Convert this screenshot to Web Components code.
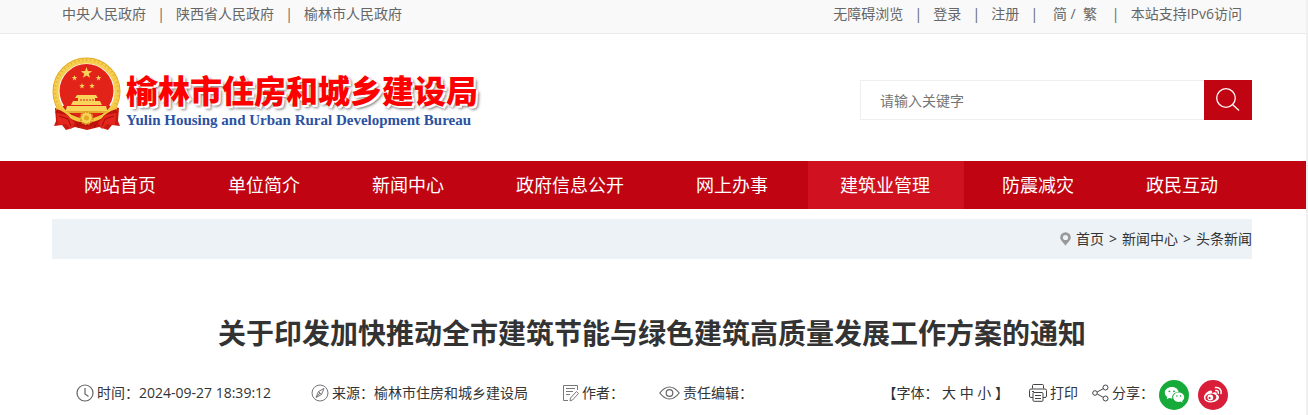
<!DOCTYPE html>
<html lang="zh-CN">
<head>
<meta charset="utf-8">
<title>榆林市住房和城乡建设局</title>
<style>
    body{
        --red:#c00411;
        --red-active:#d01220;
        --side:0 54px 0 52px;
        margin:0;
        border-right:2px solid #f0f0f0;
        background:#fff;
        color:#333;
        font:14px/28px "Open Sans","Noto Sans CJK SC",sans-serif;
        min-height:100vh;
        box-sizing:border-box;
    }
</style>
</head>
<body>
    <top-bar>
        <link-row>
            <a href="#">中央人民政府</a>
            <a href="#">陕西省人民政府</a>
            <a href="#">榆林市人民政府</a>
        </link-row>
        <link-row slot="end">
            <a href="#">无障碍浏览</a>
            <a href="#">登录</a>
            <a href="#">注册</a>
            <a href="#">&nbsp;简 /&nbsp; 繁&nbsp;</a>
            <a href="#">本站支持IPv6访问</a>
        </link-row>
    </top-bar>

    <site-header>
        <site-logo>
            <span slot="name">榆林市住房和城乡建设局</span>
            <span slot="english">Yulin Housing and Urban Rural Development Bureau</span>
        </site-logo>
        <search-box slot="search" placeholder="请输入关键字"></search-box>
    </site-header>

    <main-nav>
        <a href="#">网站首页</a>
        <a href="#">单位简介</a>
        <a href="#">新闻中心</a>
        <a href="#">政府信息公开</a>
        <a href="#">网上办事</a>
        <a href="#" class="active">建筑业管理</a>
        <a href="#">防震减灾</a>
        <a href="#">政民互动</a>
    </main-nav>

    <bread-crumbs>
        <a href="#">首页</a>
        <span>&gt;</span>
        <a href="#">新闻中心</a>
        <span>&gt;</span>
        <a href="#">头条新闻</a>
    </bread-crumbs>

    <news-article>
        <span slot="title">关于印发加快推动全市建筑节能与绿色建筑高质量发展工作方案的通知</span>
        <meta-item icon="clock" class="date">时间：2024-09-27 18:39:12</meta-item>
        <meta-item icon="compass">来源：榆林市住房和城乡建设局</meta-item>
        <meta-item icon="note">作者：</meta-item>
        <meta-item icon="eye">责任编辑：</meta-item>
        <article-tools slot="tools"></article-tools>
    </news-article>

<script>
const icons = {
    clock:`<svg width="18" height="18" viewBox="0 0 18 18" fill="none" stroke="#666" stroke-width="1.200"><circle cx="9" cy="9" r="8"/><path d="M9 4v6l3.500 2.500"/></svg>`,
    compass:`<svg width="18" height="18" viewBox="0 0 18 18" fill="none" stroke="#777"><circle cx="9" cy="9" r="8"/><path d="M13 4.500 7.500 7.500 5 13.500l5.500-3z"/><path d="M7.500 7.500l3 3M5.500 13l3.500-4"/></svg>`,
    note:`<svg width="16" height="18" viewBox="0 0 16 18" fill="none" stroke="#777"><path d="M14.500 6V1.500H.5v15h4.500M3 4.500h9M3 7.500h7M3 10.500h4"/><path d="M13.500 7.500l2 2-6 6.500-2.500.8.500-2.800z"/></svg>`,
    eye:`<svg width="21" height="18" viewBox="0 0 21 18" fill="none" stroke="#666" stroke-width="1.200"><path d="M.8 9Q5.500 3 10.500 3t9.700 6Q15.500 15 10.500 15T.8 9z"/><circle cx="10.500" cy="9" r="3.300"/></svg>`,
    printer:`<svg width="18" height="18" viewBox="0 0 18 18" fill="none" stroke="#444"><path d="M3.500 4.500v-3q0-1 1-1h9q1 0 1 1v3M4 13.500H2Q.5 13.500.5 12V6.500Q.5 5 2 5h14q1.500 0 1.500 1.500V12q0 1.500-1.500 1.500h-2"/><rect x="4" y="8.500" width="10" height="8.800" rx="1"/><path d="M6 11.500h6M6 14.500h6M3 7.500h2"/></svg>`,
    share:`<svg width="17" height="18" viewBox="0 0 17 18" fill="none" stroke="#444"><circle cx="3" cy="9" r="2.300"/><circle cx="13.500" cy="3.500" r="2.500"/><circle cx="13.500" cy="14.500" r="2.500"/><path d="M5.200 8l6-3.300M5.200 10l6 3.300"/></svg>`,
    pin:`<svg width="11" height="14" viewBox="0 0 11 14"><path fill="#999" fill-rule="evenodd" d="M5.500.2A5.300 5.300 0 0 0 .2 5.500C.2 8.500 3.500 10.500 5.500 13.800c2-3.300 5.300-5.300 5.300-8.300A5.300 5.300 0 0 0 5.500.2zm0 2.700a2.600 2.600 0 1 1 0 5.200 2.600 2.600 0 0 1 0-5.200z"/></svg>`,
    search:`<svg width="24" height="24" viewBox="0 0 24 24" fill="none" stroke="#fff" stroke-width="1.300"><circle cx="10" cy="10" r="9.300"/><path d="M16.500 16.500l6.500 6"/></svg>`,
    wechat:`<svg width="30" height="30" viewBox="0 0 30 30"><circle cx="15" cy="15" r="15" fill="#15aa39"/><path fill="#fff" d="M12.800 7C8.900 7 5.800 9.500 5.800 12.700c0 1.800 1 3.400 2.600 4.400l-.7 2.200 2.500-1.300c.8.200 1.600.4 2.500.4h.6c-.8-3.600 2.300-6.500 6.300-6.500C19 9 16.300 7 12.800 7z"/><path fill="#fff" d="M25.200 17.200c0-2.600-2.600-4.600-5.500-4.600s-5.500 2-5.500 4.600 2.500 4.700 5.500 4.700c.7 0 1.300-.1 1.900-.3l2 1.100-.5-1.800c1.300-.9 2.100-2.200 2.100-3.700z"/><g fill="#15aa39"><circle cx="10.400" cy="11.300" r=".9"/><circle cx="15" cy="11.300" r=".9"/><circle cx="17.900" cy="16" r=".8"/><circle cx="21.500" cy="16" r=".8"/></g></svg>`,
    weibo:`<svg width="30" height="30" viewBox="0 0 30 30"><circle cx="15" cy="15" r="15" fill="#d81e38"/><path fill="#fff" d="M13.800 11c-1.200-1.300-4.400.3-6.400 2.800-3.200 3.900-1.200 8.600 5.400 8.600 4.600 0 8.200-2.500 8.200-5.200 0-1.600-1.200-2.400-2.400-2.700.7-1.900-.7-2.900-4.600-1.600 .3-.9.200-1.500-.2-1.900z"/><ellipse cx="12.900" cy="17.400" rx="5.500" ry="3.800" fill="#d81e38" transform="rotate(-8 12.900 17.400)"/><circle cx="12.300" cy="17.500" r="2.900" fill="#fff"/><circle cx="11.600" cy="18" r="1.100" fill="#d81e38"/><path fill="none" stroke="#fff" stroke-width="1.500" stroke-linecap="round" d="M17.500 7.600c3.700-.8 6.600 2.300 5.500 6M17.800 10.500c1.700-.3 2.900 1 2.400 2.700"/></svg>`
}

const star = (x, y, r) => {
    let points = []
    for(let i = 0; i < 10; i++){
        const size = i % 2 ? r * .4 : r
        const angle = Math.PI * (i / 5 - .5)
        points.push((x + size * Math.cos(angle)).toFixed(2) + "," + (y + size * Math.sin(angle)).toFixed(2))
    }
    return `<polygon points="${points.join(" ")}"/>`
}

// every element clones its template into an open shadow root
class BaseElement extends HTMLElement{
    constructor(){
        super()
        this.attachShadow({mode:'open'})
    }

    connectedCallback(){
        const template = document.createElement("template")
        template.innerHTML = this.getTemplate() + `<style>${this.getStyle()}</style>`
        this.shadowRoot.replaceChildren(template.content.cloneNode(true))
    }
}

class TopBar extends BaseElement{
    getTemplate(){
        return `<slot></slot><slot name="end"></slot>`
    }

    getStyle(){
        return `
            :host{
                display:flex;
                justify-content:space-between;
                padding:var(--side);
                height:33px;
                background:#f9f9f9;
                border-bottom:1px solid #ebebeb;
                color:#666;
            }
        `
    }
}

class LinkRow extends BaseElement{
    getTemplate(){
        return [...this.children].map((link, i) => {
            link.slot = "link" + i
            return (i ? `<span>|</span>` : "") + `<slot name="link${i}"></slot>`
        }).join("")
    }

    getStyle(){
        return `
            :host{
                display:flex;
                padding:0 10px;
            }
            span{
                width:30px;
                text-align:center;
            }
            ::slotted(a){
                color:inherit;
                text-decoration:none;
            }
        `
    }
}

class SiteHeader extends BaseElement{
    getTemplate(){
        return `<header><slot></slot><slot name="search"></slot></header>`
    }

    getStyle(){
        return `
            :host{
                display:block;
                padding:var(--side);
            }
            header{
                display:flex;
                justify-content:space-between;
                padding:23px 0 29px;
            }
        `
    }
}

class SiteLogo extends BaseElement{
    getTemplate(){
        return `
            ${this.getEmblem()}
            <div>
                <h1><slot name="name"></slot></h1>
                <p><slot name="english"></slot></p>
            </div>
        `
    }

    getEmblem(){
        return `
        <svg width="70" height="75" viewBox="0 0 70 75">
            <path fill="#c91a12" d="M3 51l12-3h40l12 3-1 13 2 5-8-1-4 5-9-3-12 3-12-3-9 3-4-5-8 1 2-5z"/>
            <circle cx="34.500" cy="34.500" r="31.500" fill="none" stroke="#e3ac25" stroke-width="5"/>
            <circle cx="34.500" cy="34.500" r="30.500" fill="none" stroke="#f6cf50" stroke-width="5"/>
            <circle cx="34.500" cy="34.500" r="31.500" fill="none" stroke="#e3ac30" stroke-width="2" stroke-dasharray="1 3"/>
            <circle cx="34.500" cy="34" r="27" fill="#e2231a"/>
            <g fill="#f8d35a">
                ${star(34.5, 16, 6)}${star(22.5, 21, 3)}${star(46.5, 21, 3)}${star(30, 29, 3)}${star(40, 29, 3)}
            </g>
            <g fill="#f9d45b">
                <path d="M25 38h19l2 3H23zM26 41h17v3H26zM21 44h27l2 4H19zM15 49h39l2 7H13z"/>
                <path fill="#e4ab2c" d="M13 54h43v2H13z"/>
            </g>
            <path stroke="#d52a1b" d="M29 42v2M32 42v2M35 42v2M38 42v2M41 42v2"/>
            <path fill="#f4c743" d="M5 47q14 14 29.500 15Q50 61 64 47l1 6Q54 64 34.500 68 15 64 4 53z"/>
            <path fill="none" stroke="#be120d" stroke-width="4" d="M4 54q9 3 13 9 9 5 17 4 8 1 17-4 4-6 14-9"/>
            <circle cx="34.500" cy="61" r="6" fill="#f8d35a" stroke="#d99c1d" stroke-width="2" stroke-dasharray="2 1"/>
            <circle cx="34.500" cy="61" r="2.500" fill="#e4a821"/>
            <path fill="#e5261c" d="M5 56l10 2 8 8-4 6-5-5-8 1zM64 56l-10 2-8 8 4 6 5-5 8 1z"/>
            <path fill="none" stroke="#9f0d0a" d="M7 59l9 3 3 7M62 59l-9 3-3 7M25 68l2 3M44 68l-2 3"/>
        </svg>`
    }

    getStyle(){
        return `
            :host{
                display:flex;
                gap:4px;
            }
            div{
                padding-top:11px;
            }
            h1,p{
                margin:0;
                white-space:nowrap;
            }
            h1{
                color:#fe0000;
                font-family:"Noto Sans CJK SC",sans-serif;
                font-size:32px;
                font-weight:900;
                line-height:42px;
                text-shadow:1px 1px 0 #fff,2px 2px 0 #fff,3px 3px 3px #777;
            }
            p{
                color:#2b52a0;
                font-family:"Liberation Serif",serif;
                font-size:15px;
                font-weight:700;
                line-height:20px;
            }
        `
    }
}

class SearchBox extends BaseElement{
    getTemplate(){
        return `
            <form>
                <input type="text" aria-label="搜索" placeholder="${this.getAttribute("placeholder")}">
                <button type="button" aria-label="搜索">${icons.search}</button>
            </form>
        `
    }

    getStyle(){
        return `
            :host{
                flex:0 1 392px;
                padding-top:23px;
            }
            form{
                display:flex;
                height:40px;
            }
            input{
                flex:1;
                min-width:0;
                padding:2px 19px 0;
                border:1px solid #eee;
                border-right:0;
                font:inherit;
            }
            input::placeholder{
                color:#757575;
            }
            button{
                display:grid;
                place-items:center;
                width:48px;
                padding:0;
                border:0;
                background:var(--red);
            }
        `
    }
}

class MainNav extends BaseElement{
    getTemplate(){
        return `<nav><slot></slot></nav>`
    }

    getStyle(){
        return `
            :host{
                display:block;
                padding:var(--side);
                background:var(--red);
            }
            nav{
                display:flex;
                gap:6px;
            }
            ::slotted(a){
                padding:0 34px 0 32px;
                color:#fff;
                font-size:18px;
                line-height:48px;
                text-decoration:none;
                white-space:nowrap;
            }
            ::slotted(.active){
                background:var(--red-active);
            }
        `
    }
}

class BreadCrumbs extends BaseElement{
    getTemplate(){
        return `<nav>${icons.pin}<slot></slot></nav>`
    }

    getStyle(){
        return `
            :host{
                display:block;
                padding:var(--side);
            }
            nav{
                display:flex;
                align-items:center;
                justify-content:flex-end;
                gap:5px;
                height:40px;
                margin-top:10px;
                background:#edf2f6;
            }
            ::slotted(*){
                color:#333;
                text-decoration:none;
            }
        `
    }
}

class NewsArticle extends BaseElement{
    getTemplate(){
        return `
            <h2><slot name="title"></slot></h2>
            <section>
                <slot></slot>
                <slot name="tools"></slot>
            </section>
        `
    }

    getStyle(){
        return `
            :host{
                display:block;
                padding:var(--side);
            }
            h2{
                margin:53px 0 26px;
                font-size:28px;
                line-height:42px;
                text-align:center;
            }
            section{
                display:flex;
                align-items:center;
                gap:35px;
                padding:0 24px;
                height:30px;
            }
            ::slotted(.date){
                min-width:200px;
            }
            ::slotted(article-tools){
                margin-left:auto;
            }
        `
    }
}

class MetaItem extends BaseElement{
    getTemplate(){
        return `${icons[this.getAttribute("icon")]}<span><slot></slot></span>`
    }

    getStyle(){
        return `
            :host{
                display:flex;
                align-items:center;
                gap:3px;
                padding-bottom:4px;
                white-space:nowrap;
            }
        `
    }
}

class ArticleTools extends BaseElement{
    getTemplate(){
        return `
            <span class="size">【字体： <a href="#">大</a> <a href="#">中</a> <a href="#">小</a> 】</span>
            <a class="tool" href="#">${icons.printer}打印</a>
            <span class="tool">${icons.share}分享：</span>
            <a class="round" href="#" aria-label="微信">${icons.wechat}</a>
            <a class="round" href="#" aria-label="微博">${icons.weibo}</a>
        `
    }

    getStyle(){
        return `
            :host{
                display:flex;
                align-items:center;
                white-space:nowrap;
            }
            a{
                color:inherit;
                text-decoration:none;
            }
            .size,.tool{
                padding-bottom:4px;
            }
            .size{
                margin-right:20px;
            }
            .tool{
                display:flex;
                align-items:center;
                gap:3px;
            }
            a.tool{
                margin-right:14px;
            }
            .round{
                display:flex;
                margin-left:9px;
            }
            .tool + .round{
                margin-left:5px;
            }
        `
    }
}

customElements.define('top-bar',TopBar)
customElements.define('link-row',LinkRow)
customElements.define('site-header',SiteHeader)
customElements.define('site-logo',SiteLogo)
customElements.define('search-box',SearchBox)
customElements.define('main-nav',MainNav)
customElements.define('bread-crumbs',BreadCrumbs)
customElements.define('news-article',NewsArticle)
customElements.define('meta-item',MetaItem)
customElements.define('article-tools',ArticleTools)
</script>
</body>
</html>
